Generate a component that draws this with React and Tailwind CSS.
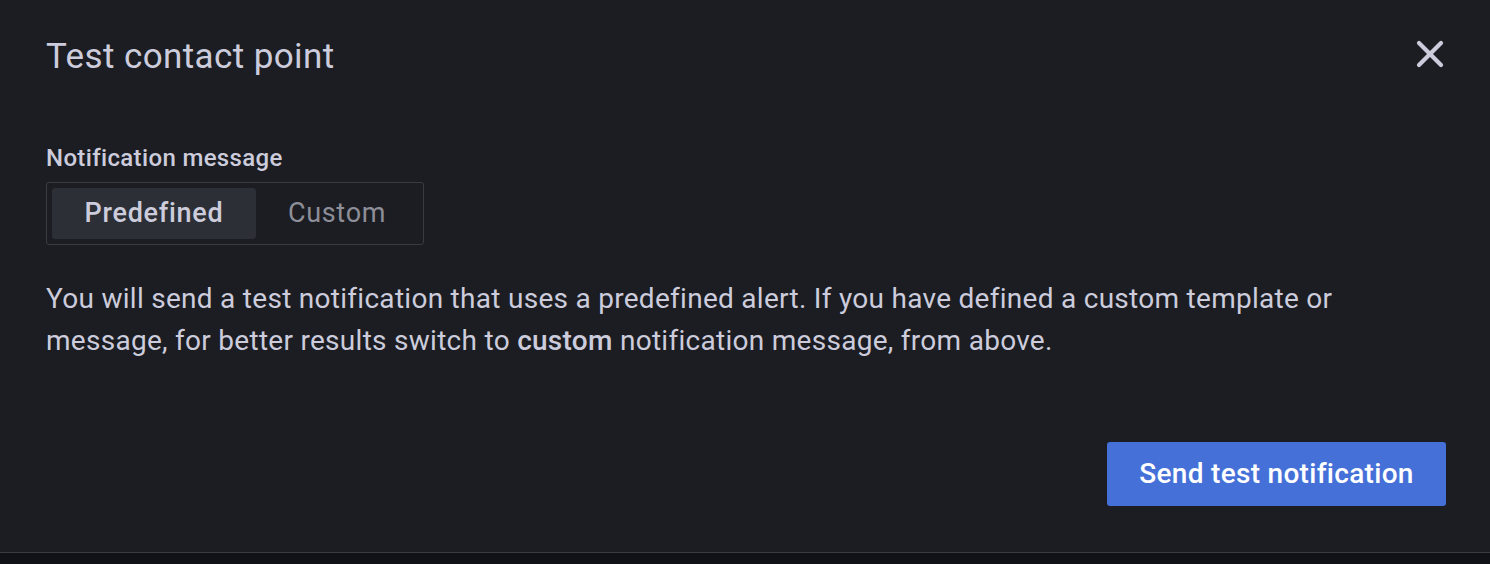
import { X } from "lucide-react";

export default function App() {
  return (
    <div
      className="flex h-[564px] w-full flex-col bg-[#111217] text-[#ccccdc]"
      style={{ fontFamily: "Roboto, 'Liberation Sans', sans-serif" }}
    >
      <div className="flex h-[553px] flex-col border-b border-[#3a3b40] bg-[#1b1d22] pl-[46px] pr-[44px]">
        {/* Header */}
        <div className="flex h-[142px] items-start justify-between pt-[33px]">
          <h1 className="text-[35px] leading-[48px] font-normal tracking-[0.4px]">Test contact point</h1>
          <button className="-mr-[8px] -mt-[3px] flex h-[48px] w-[48px] items-center justify-center text-[#ccccdc]">
            <X size={44} strokeWidth={2.3} />
          </button>
        </div>

        {/* Notification message */}
        <label className="text-[24px] leading-[32px] font-medium tracking-[0.35px]">Notification message</label>
        <div className="mt-[8px] flex h-[63px] w-[378px] items-stretch gap-[6px] rounded-[3px] border border-[#3a3b40] p-[5px]">
          <div className="flex w-[204px] items-center justify-center rounded-[3px] bg-[#2c2f35] text-[27px] font-medium tracking-[0.7px]">
            Predefined
          </div>
          <div className="flex w-[150px] items-center justify-center text-[27px] tracking-[0.7px] text-[#8d8e98]">
            Custom
          </div>
        </div>

        <p className="mt-[33px] max-w-[1330px] text-[28px] leading-[42px] tracking-[0.28px]">
          You will send a test notification that uses a predefined alert. If you have defined a custom template or
          message, for better results switch to <span className="font-medium">custom</span> notification message, from above.
        </p>

        <div className="mt-auto mb-[46px] flex justify-end">
          <button className="flex h-[64px] w-[339px] items-center justify-center rounded-[3px] bg-[#4470d8] text-[28px] font-medium tracking-[0.3px] text-white">
            Send test notification
          </button>
        </div>
      </div>
    </div>
  );
}
